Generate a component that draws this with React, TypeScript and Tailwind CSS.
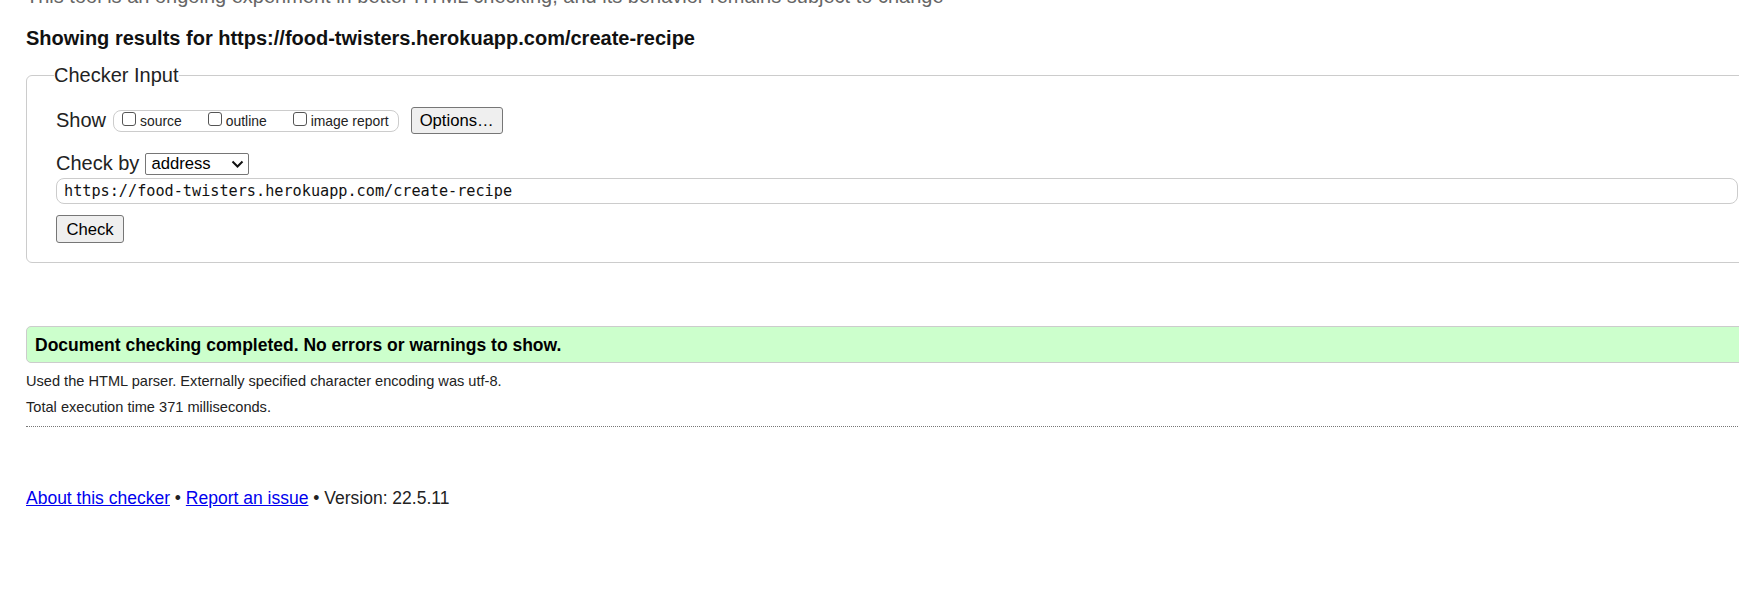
import React from "react";

function Tick({ label, last }: { label: string; last?: boolean }) {
  return (
    <label className={`inline-flex items-center ${last ? "" : "mr-[26px]"}`}>
      <input
        type="checkbox"
        className="-mt-[3px] h-[14px] w-[14px] appearance-none rounded-[3px] border border-[#555] bg-white"
      />
      <span className="ml-[4px] text-[13.9px] leading-[16px] text-[#222]">{label}</span>
    </label>
  );
}

export default function App() {
  return (
    <div className="h-[615px] w-full overflow-hidden bg-white font-['Liberation_Sans',Arial,sans-serif] text-[#222]">
      <div className="ml-[26px] w-[1742px]">
        <p className="-mt-[15px] text-[20px] leading-[23px] text-[#666]">
          This tool is an ongoing experiment in better HTML checking, and its behavior remains subject to change
        </p>
        <h2 className="mt-[19px] text-[20px] font-bold leading-[23px] text-[#111]">
          Showing results for https://food-twisters.herokuapp.com/create-recipe
        </h2>

        <fieldset className="mt-[14px] rounded-[6px] border border-[#ccc] px-[29px] pb-[19px] pt-[20px]">
          <legend className="-ml-[2px] px-0 text-[20px] leading-[23px] text-[#222]">Checker Input</legend>

          <div className="flex h-[27px] items-center">
            <span className="text-[20px] leading-[23px]">Show</span>
            <div className="ml-[7px] flex h-[22px] items-center rounded-[8px] border border-[#ccc] pl-[8px] pr-[9px]">
              <Tick label="source" />
              <Tick label="outline" />
              <Tick label="image report" last />
            </div>
            <button className="ml-[12px] h-[27px] w-[92px] rounded-[3px] border border-[#767676] bg-[#efefef] text-[16.67px] text-black">
              Options…
            </button>
          </div>

          <div className="mt-[18px] flex h-[23px] items-center">
            <span className="text-[20px] leading-[23px]">Check by</span>
            <div className="ml-[6px] flex h-[22px] w-[104px] items-center justify-between rounded-[2px] border border-[#767676] bg-white pl-[5px] pr-[4px] text-[16.67px] text-black">
              <span>address</span>
              <svg width="13" height="8" viewBox="0 0 13 8" fill="none">
                <path d="M1.5 1.5 L6.5 6.5 L11.5 1.5" stroke="#111" strokeWidth="2" />
              </svg>
            </div>
          </div>

          <input
            readOnly
            defaultValue="https://food-twisters.herokuapp.com/create-recipe"
            className="mt-[3px] block h-[26px] w-full rounded-[8px] border border-[#ccc] bg-white pl-[7px] font-['DejaVu_Sans_Mono',monospace] text-[15.2px] text-[#111] outline-none"
          />

          <button className="mt-[11px] block h-[28px] w-[68px] rounded-[3px] border border-[#767676] bg-[#efefef] text-[16.67px] text-black">
            Check
          </button>
        </fieldset>

        <div className="mt-[63px] flex h-[37px] items-center rounded-[5px] border border-[#ccc] bg-[#ccffcc] pl-[8px]">
          <span className="text-[17.5px] font-bold leading-[20px] text-black">
            Document checking completed. No errors or warnings to show.
          </span>
        </div>

        <p className="mt-[10px] text-[14.6px] leading-[17px]">
          Used the HTML parser. Externally specified character encoding was utf-8.
        </p>
        <p className="mt-[9px] text-[14.6px] leading-[17px]">Total execution time 371 milliseconds.</p>
        <div className="mt-[10px] border-t border-dotted border-[#777]" />

        <p className="mt-[61px] text-[17.5px] leading-[20px]">
          <a href="#" className="text-[#0000ee] underline">About this checker</a> •{" "}
          <a href="#" className="text-[#0000ee] underline">Report an issue</a> • Version: 22.5.11
        </p>
      </div>
    </div>
  );
}
